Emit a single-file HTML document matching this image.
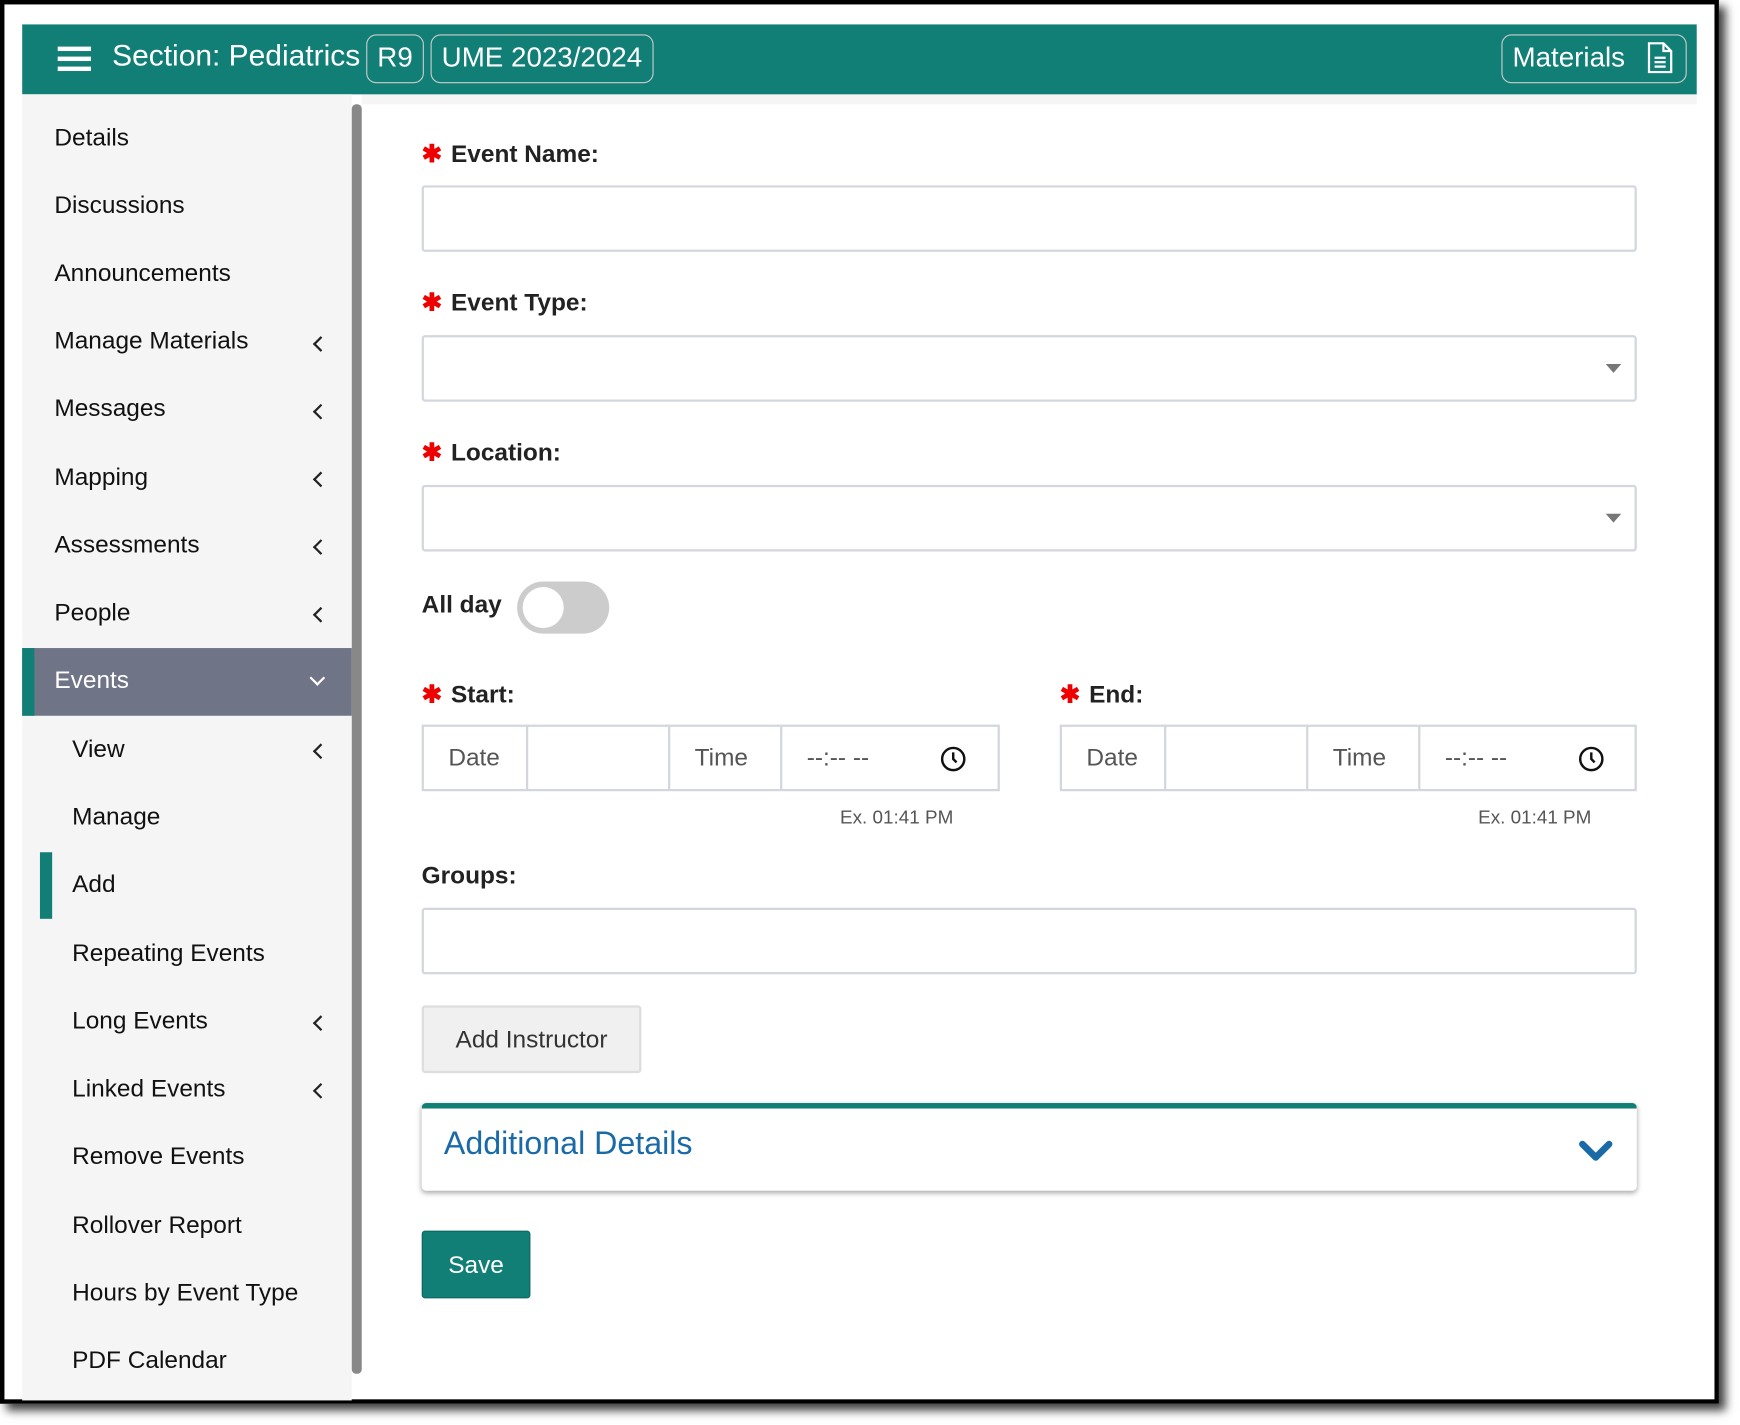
<!DOCTYPE html>
<html><head><meta charset="utf-8"><style>
*{box-sizing:border-box;margin:0;padding:0}
html,body{width:1740px;height:1424px;overflow:hidden;background:#fff}
#s{position:absolute;left:0;top:0;width:1568px;height:1284px;transform:scale(1.10969);transform-origin:0 0;font-family:"Liberation Sans",sans-serif}
.frame{position:absolute;left:0;top:0;width:1549px;height:1265px;border:4px solid #000;background:#fff;box-shadow:6px 6px 8px rgba(0,0,0,.75)}
.a{position:absolute}
.hdr{left:20px;top:22px;width:1509px;height:63px;background:#127f77;color:#fff}
.pill{position:absolute;top:9px;height:44px;border:1.5px solid #ccc;border-radius:9px;font-size:25px;line-height:40px;padding:0 9px;color:#fff}
.side{left:20px;top:85px;width:297px;height:1177px;background:#f5f5f5}
.item{position:absolute;left:29px;font-size:22px;color:#111}
.sub{left:45px}
.chev{position:absolute;left:264px;width:10px;height:10px;border-left:2px solid #222;border-bottom:2px solid #222;transform:rotate(45deg)}
.lbl{position:absolute;font-size:22px;font-weight:bold;color:#222}
.ast{color:#e00;margin-right:8px}
.inp{position:absolute;border:2px solid #d4d6de;border-radius:3px;background:#fff}
.cell{position:absolute;top:653px;height:60px;border:2px solid #d4d6de;font-size:22px;color:#555;line-height:56px;padding-left:22px;background:#fff}
.caret{position:absolute;right:12px;top:24px;width:0;height:0;border-left:7px solid transparent;border-right:7px solid transparent;border-top:8px solid #777}
.ex{position:absolute;top:727px;font-size:17px;color:#555}
</style></head><body><div id="s">
<div class="frame"></div>
<div class="a" style="left:326px;top:85px;width:1203px;height:9px;background:#f5f5f5"></div>
<div class="a hdr">
 <div class="a" style="left:32px;top:20px;width:30px;height:4px;background:#fff;box-shadow:0 9px 0 #fff,0 18px 0 #fff"></div>
 <div class="a" style="left:81px;top:13px;font-size:27px">Section: Pediatrics</div>
 <div class="pill" style="left:310px">R9</div>
 <div class="pill" style="left:368px">UME 2023/2024</div>
 <div class="pill" style="left:1333px;width:167px">Materials
  <svg style="position:absolute;left:130px;top:6px" width="24" height="28" viewBox="0 0 24 28" fill="none" stroke="#fff" stroke-width="2"><path d="M2 1h13l7 7v19H2z"/><path d="M15 1v7h7M7 14h10M7 18h10M7 22h10"/></svg></div>
</div>
<div class="a side">
 <div class="item" style="top:26px">Details</div>
 <div class="item" style="top:87px">Discussions</div>
 <div class="item" style="top:148px">Announcements</div>
 <div class="item" style="top:209px">Manage Materials</div><div class="chev" style="top:220px"></div>
 <div class="item" style="top:270px">Messages</div><div class="chev" style="top:281px"></div>
 <div class="item" style="top:332px">Mapping</div><div class="chev" style="top:342px"></div>
 <div class="item" style="top:393px">Assessments</div><div class="chev" style="top:403px"></div>
 <div class="item" style="top:454px">People</div><div class="chev" style="top:464px"></div>
 <div class="a" style="left:0;top:499px;width:297px;height:61px;background:#6f7486"></div>
 <div class="a" style="left:0;top:499px;width:11px;height:61px;background:#127f77"></div>
 <div class="item" style="top:515px;color:#fff">Events</div>
 <div class="a" style="left:261px;top:521px;width:10px;height:10px;border-right:2px solid #fff;border-bottom:2px solid #fff;transform:rotate(45deg)"></div>
 <div class="item sub" style="top:577px">View</div><div class="chev" style="top:587px"></div>
 <div class="item sub" style="top:638px">Manage</div>
 <div class="a" style="left:16px;top:683px;width:11px;height:60px;background:#127f77"></div>
 <div class="item sub" style="top:699px">Add</div>
 <div class="item sub" style="top:761px">Repeating Events</div>
 <div class="item sub" style="top:822px">Long Events</div><div class="chev" style="top:832px"></div>
 <div class="item sub" style="top:883px">Linked Events</div><div class="chev" style="top:893px"></div>
 <div class="item sub" style="top:944px">Remove Events</div>
 <div class="item sub" style="top:1006px">Rollover Report</div>
 <div class="item sub" style="top:1067px">Hours by Event Type</div>
 <div class="item sub" style="top:1128px">PDF Calendar</div>
</div>
<div class="a" style="left:317px;top:94px;width:9px;height:1144px;background:#888;border-radius:4px"></div>

<div class="lbl" style="left:380px;top:126px"><span class="ast">✱</span>Event Name:</div>
<div class="inp" style="left:380px;top:167px;width:1095px;height:60px"></div>
<div class="lbl" style="left:380px;top:260px"><span class="ast">✱</span>Event Type:</div>
<div class="inp" style="left:380px;top:302px;width:1095px;height:60px"><div class="caret"></div></div>
<div class="lbl" style="left:380px;top:395px"><span class="ast">✱</span>Location:</div>
<div class="inp" style="left:380px;top:437px;width:1095px;height:60px"><div class="caret"></div></div>
<div class="lbl" style="left:380px;top:532px">All day</div>
<div class="a" style="left:466px;top:524px;width:83px;height:47px;border-radius:24px;background:#ccc"></div>
<div class="a" style="left:471px;top:529px;width:37px;height:37px;border-radius:50%;background:#fff"></div>

<div class="lbl" style="left:380px;top:613px"><span class="ast">✱</span>Start:</div>
<div class="cell" style="left:380px;width:96px">Date</div>
<div class="cell" style="left:474px;width:130px"></div>
<div class="cell" style="left:602px;width:103px">Time</div>
<div class="cell" style="left:703px;width:198px">--:-- --
 <svg style="position:absolute;left:142px;top:17px" width="24" height="24" viewBox="0 0 24 24" fill="none" stroke="#111" stroke-width="2.2"><circle cx="12" cy="12" r="10"/><path d="M12 6v6l3 3"/></svg></div>
<div class="ex" style="left:757px">Ex. 01:41 PM</div>

<div class="lbl" style="left:955px;top:613px"><span class="ast">✱</span>End:</div>
<div class="cell" style="left:955px;width:96px">Date</div>
<div class="cell" style="left:1049px;width:130px"></div>
<div class="cell" style="left:1177px;width:103px">Time</div>
<div class="cell" style="left:1278px;width:197px">--:-- --
 <svg style="position:absolute;left:142px;top:17px" width="24" height="24" viewBox="0 0 24 24" fill="none" stroke="#111" stroke-width="2.2"><circle cx="12" cy="12" r="10"/><path d="M12 6v6l3 3"/></svg></div>
<div class="ex" style="left:1332px">Ex. 01:41 PM</div>

<div class="lbl" style="left:380px;top:776px">Groups:</div>
<div class="inp" style="left:380px;top:818px;width:1095px;height:60px"></div>
<div class="a" style="left:380px;top:906px;width:198px;height:61px;background:#f0f0f0;border:2px solid #ddd;border-radius:3px;font-size:22px;color:#333;line-height:57px;text-align:center">Add Instructor</div>
<div class="a" style="left:380px;top:994px;width:1095px;height:79px;background:#fff;border-top:5px solid #127f77;border-radius:4px;box-shadow:0 2px 5px rgba(0,0,0,.35)">
 <div class="a" style="left:20px;top:16px;font-size:29px;color:#1a6aa8">Additional Details</div>
 <svg class="a" style="left:1042px;top:28px" width="32" height="22" viewBox="0 0 32 22"><path d="M4 4l12 12 12-12" fill="none" stroke="#1a6aa8" stroke-width="6" stroke-linecap="round" stroke-linejoin="round"/></svg>
</div>
<div class="a" style="left:380px;top:1109px;width:98px;height:61px;background:#127f77;border-radius:3px;border:1px solid #0d6660;color:#fff;font-size:22px;line-height:59px;text-align:center">Save</div>
</div></body></html>
